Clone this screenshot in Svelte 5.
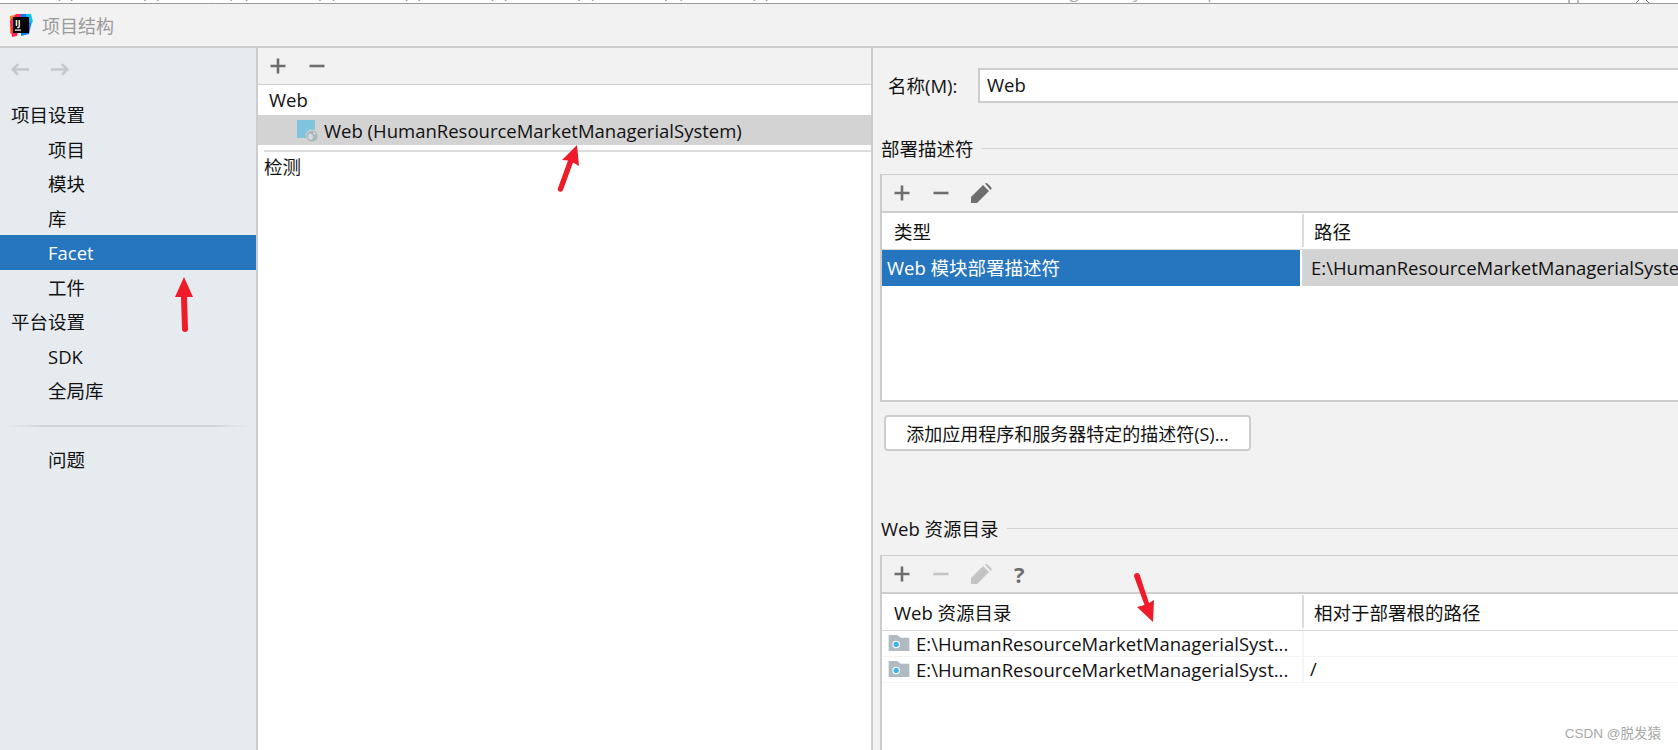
<script lang="ts">
  const nav = [
    { label: '项目设置', head: true },
    { label: '项目' },
    { label: '模块' },
    { label: '库' },
    { label: 'Facet', active: true },
    { label: '工件' },
    { label: '平台设置', head: true },
    { label: 'SDK' },
    { label: '全局库' }
  ];
  const path = 'E:\\HumanResourceMarketManagerialSystem\\web\\WEB-INF\\web.xml';
  const shortPath = 'E:\\HumanResourceMarketManagerialSyst...';
</script>

{#snippet plus()}
  <svg class="ico" viewBox="0 0 18 18"><path d="M9 1.500v15M1.500 9h15" fill="none" stroke="#6e6e6e" stroke-width="2.600" /></svg>
{/snippet}
{#snippet minus(off = false)}
  <svg class="ico" viewBox="0 0 18 18"><path d="M1.500 9h15" fill="none" stroke={off ? '#c4c4c4' : '#6e6e6e'} stroke-width="2.600" /></svg>
{/snippet}
{#snippet pencil(off = false)}
  <svg class="ico pen" viewBox="0 0 22 22"><path d="M1 21v-6L13 3l6 6L7 21zM15 1.500l1-.5q1 0 2 1l3 3q.8 1 .5 2l-1 1z" fill={off ? '#c4c4c4' : '#6e6e6e'} /></svg>
{/snippet}
{#snippet folder()}
  <svg class="folder" viewBox="0 0 22 17">
    <path d="M0 0h9l4 3h9v14H0z" fill="#afbac2" />
    <circle cx="8" cy="10" r="4" fill="#fff" />
    <circle cx="8" cy="10" r="2.800" fill="#3db4e6" />
  </svg>
{/snippet}
{#snippet arrow(w, h, d)}
  <svg class="arrow" width={w} height={h} viewBox="0 0 {w} {h}"><path {d} fill="#ee1c2b" /></svg>
{/snippet}

<div class="cut-menu">
  <span>文件(F)</span><span>编辑(E)</span><span>视图(V)</span><span>导航(N)</span><span>代码(C)</span><span>分析(Z)</span><span>重构(R)</span><span>构建(B)</span><span>运行(U)</span><span>工具(T)</span>
  <span class="cut-title">HumanResourceMarketManagerialSystem - pom.xml</span>
  <svg class="win-ctl" viewBox="0 0 90 3"><path d="M1 0v3M10 0v3M68 3l3-3M78 0l3 3" fill="none" stroke="#777" /></svg>
</div>

<header class="titlebar">
  <svg class="logo" viewBox="0 0 24 24">
    <path d="M1 3l9-2 4 4-8 18-5-3z" fill="#fc801d" />
    <path d="M1 8l6-7h6L8 23l-5 1z" fill="#fe2857" />
    <path d="M12 1h9l2 7-3 13-8 2z" fill="#087cfa" />
    <path d="M17 1h5l2 8-6 1z" fill="#07c3f2" />
    <rect x="4" y="4" width="16" height="16" fill="#000" />
    <rect x="6" y="16.500" width="6" height="1.200" fill="#fff" />
    <text x="6" y="12.500" class="logo-text">IJ</text>
  </svg>
  <span>项目结构</span>
</header>

<div class="body">
  <aside class="sidebar">
    <div class="history">
      <svg viewBox="0 0 22 16"><path d="M21 8H3M9 2L3 8l6 6" fill="none" stroke="#c6c9cc" stroke-width="2.800" /></svg>
      <svg viewBox="0 0 22 16"><path d="M1 8h18M13 2l6 6-6 6" fill="none" stroke="#c6c9cc" stroke-width="2.800" /></svg>
    </div>
    <nav>
      {#each nav as item}
        <div class="nav-item" class:head={item.head} class:active={item.active}>{item.label}</div>
      {/each}
    </nav>
    <div class="nav-sep"></div>
    <div class="nav-item">问题</div>
    <div class="annot-side">{@render arrow(18, 55, 'M9 0L18 20H12L13 52a3 3 0 0 1-6 0L6 20H0z')}</div>
  </aside>

  <section class="middle">
    <div class="mid-toolbar">{@render plus()}{@render minus()}</div>
    <div class="tree-root">Web</div>
    <div class="tree-sel">
      <svg class="web-ico" viewBox="0 0 22 22">
        <rect x="0" y="0" width="18" height="18" fill="#7fc4df" />
        <circle cx="15" cy="16" r="6.500" fill="#d3d3d3" />
        <circle cx="15" cy="16" r="5.500" fill="#a9b5bd" />
        <path d="M12 13q3 1 4 3t-2 4l-3-2zM16 11.500l3 2-2 2z" fill="#d8dde0" />
      </svg>
      Web (HumanResourceMarketManagerialSystem)
      <div class="annot-mid">{@render arrow(22, 47, 'M19 0L21 21L15 17.500L5 45a2.500 2.500 0 0 1-5-2L10 15.500L4 15z')}</div>
    </div>
    <div class="detect-line"></div>
    <div class="detect">检测</div>
  </section>

  <section class="detail">
    <div class="name-row">
      <label for="facet-name">名称(M):</label>
      <input id="facet-name" value="Web" readonly />
    </div>

    <div class="group-title">部署描述符</div>
    <div class="box">
      <div class="box-toolbar">{@render plus()}{@render minus()}{@render pencil()}</div>
      <div class="cols head">
        <div>类型</div><div>路径</div>
      </div>
      <div class="cols sel-row">
        <div class="sel-blue">Web 模块部署描述符</div>
        <div class="sel-gray">{path}</div>
      </div>
      <div class="box-empty one"></div>
    </div>

    <div class="btn-row"><button>添加应用程序和服务器特定的描述符(S)...</button></div>

    <div class="group-title res">Web 资源目录</div>
    <div class="box last">
      <div class="box-toolbar">{@render plus()}{@render minus(true)}{@render pencil(true)}<span class="help">?</span></div>
      <div class="cols head">
        <div>Web 资源目录</div><div>相对于部署根的路径</div>
      </div>
      <div class="cols res-row">
        <div>{@render folder()}{shortPath}</div><div></div>
      </div>
      <div class="cols res-row">
        <div>{@render folder()}{shortPath}</div><div>/</div>
      </div>
      <div class="annot-res">{@render arrow(20, 50, 'M19 50L3 35L10.500 33L.3 5a2.800 2.800 0 0 1 5.500-2L15 31L20 28z')}</div>
    </div>
  </section>
</div>

<div class="watermark">CSDN @脱发猿</div>

<style>
  :global(body) {
    margin: 0;
    background: #fff;
    overflow: hidden;
  }

  :global(#app) {
    position: relative;
    width: 1678px;
    height: 750px;
    overflow: hidden;
    font-family: 'Open Sans', 'Noto Sans CJK SC', sans-serif;
    font-size: 18.500px;
    color: #111;
  }

  .cut-menu {
    height: 3px;
    overflow: hidden;
    display: flex;
    gap: 32px;
    margin-left: -63px;
    line-height: 1px;
    font-size: 17px;
    white-space: nowrap;
    background: #fff;
    border-bottom: 1px solid #9a9a9a;
  }

  .cut-menu span {
    margin-top: -9px;
  }

  .cut-menu .cut-title {
    color: #aaa;
    letter-spacing: 1.500px;
  }

  .win-ctl {
    width: 90px;
    height: 3px;
    margin-left: auto;
    margin-right: 20px;
    flex: none;
  }

  .titlebar {
    height: 42px;
    display: flex;
    align-items: center;
    gap: 9px;
    padding-left: 9px;
    background: #f2f2f2;
    border-bottom: 2px solid #cdcdcd;
    color: #9a9a9a;
    font-size: 18px;
  }

  .logo {
    width: 24px;
    height: 24px;
  }

  .logo-text {
    font-size: 8.500px;
    font-weight: 700;
    fill: #fff;
  }

  .body {
    display: flex;
    height: 702px;
  }

  .sidebar {
    position: relative;
    width: 256px;
    flex: none;
    background: #e6ebf0;
    border-right: 2px solid #cdcdcd;
  }

  .history {
    height: 42px;
    display: flex;
    align-items: center;
    gap: 20px;
    padding-left: 10px;
  }

  .history svg {
    width: 20px;
    height: 15px;
  }

  nav {
    margin-top: 7px;
  }

  .nav-item {
    height: 34.500px;
    line-height: 36px;
    padding-left: 48px;
  }

  .nav-item.head {
    padding-left: 11px;
  }

  .nav-item.active {
    background: #2675bf;
    color: #fff;
  }

  .nav-sep {
    height: 2px;
    margin: 17px 8px 15px;
    background: linear-gradient(90deg, #e6ebf0, #d2d4d6 15%, #d2d4d6 85%, #e6ebf0);
  }

  .annot-side {
    position: absolute;
    left: 175px;
    top: 229px;
  }

  .arrow {
    display: block;
    overflow: visible;
  }

  .middle {
    width: 613px;
    flex: none;
    background: #fff;
    border-right: 2px solid #cdcdcd;
  }

  .mid-toolbar {
    height: 36px;
    display: flex;
    align-items: center;
    gap: 21px;
    padding-left: 11px;
    background: #f2f2f2;
    border-bottom: 1px solid #d0d0d0;
  }

  .ico {
    width: 18px;
    height: 18px;
    flex: none;
  }

  .ico.pen {
    width: 22px;
    height: 22px;
    margin-left: -1px;
  }

  .tree-root {
    height: 30px;
    line-height: 29px;
    padding-left: 11px;
  }

  .tree-sel {
    position: relative;
    height: 30px;
    display: flex;
    align-items: center;
    gap: 5px;
    padding-left: 39px;
    background: #d3d3d3;
  }

  .web-ico {
    width: 22px;
    height: 22px;
    margin-top: 2px;
  }

  .annot-mid {
    position: absolute;
    left: 300px;
    top: 30px;
  }

  .detect-line {
    height: 2px;
    margin: 5px 0 0 6px;
    background: #dcdcdc;
  }

  .detect {
    padding-left: 6px;
    line-height: 30px;
  }

  .detail {
    flex: 1;
    min-width: 0;
    background: #f2f2f2;
  }

  .name-row {
    display: flex;
    align-items: center;
    height: 35px;
    margin-top: 20px;
    padding-left: 15px;
  }

  .name-row label {
    width: 90px;
    padding-bottom: 2px;
  }

  .name-row input {
    flex: 1;
    min-width: 0;
    height: 35px;
    box-sizing: border-box;
    padding: 0 7px 2px;
    border: 2px solid #cdcdcd;
    border-right: 0;
    font: inherit;
    color: #111;
    background: #fff;
    outline: none;
  }

  .group-title {
    display: flex;
    align-items: center;
    gap: 8px;
    height: 26px;
    margin: 32px 0 13px 8px;
  }

  .group-title::after {
    content: '';
    flex: 1;
    height: 1px;
    background: #d2d2d2;
  }

  .group-title.res {
    margin: 64px 0 14px 8px;
  }

  .box {
    position: relative;
    margin-left: 7px;
    border-left: 2px solid #cdcdcd;
    border-top: 1px solid #cdcdcd;
    background: #fff;
  }

  .box-toolbar {
    height: 36px;
    display: flex;
    align-items: center;
    gap: 21px;
    padding-left: 11px;
    background: #f2f2f2;
    border-bottom: 2px solid #cdcdcd;
  }

  .help {
    font-size: 22px;
    font-weight: 700;
    color: #6e6e6e;
    margin-left: 1px;
  }

  .cols {
    display: grid;
    grid-template-columns: 420px 1fr;
  }

  .cols > div {
    white-space: nowrap;
    overflow: hidden;
  }

  .cols.head {
    height: 36px;
    line-height: 37px;
    border-bottom: 1px solid #d8d8d8;
  }

  .cols.head > div {
    padding-left: 12px;
  }

  .cols.head > div + div {
    padding-left: 10px;
    border-left: 2px solid #dcdcdc;
    height: 33px;
    margin-top: 1px;
    line-height: 35px;
  }

  .sel-row {
    height: 36px;
    line-height: 36px;
  }

  .sel-blue {
    background: #2675bf;
    color: #fff;
    padding-left: 5px;
    margin-right: 2px;
  }

  .sel-gray {
    background: #d3d3d3;
    padding-left: 9px;
  }

  .box-empty.one {
    height: 114px;
    border-bottom: 2px solid #cdcdcd;
  }

  .btn-row {
    padding: 13px 0 0 11px;
  }

  button {
    width: 367px;
    height: 36px;
    padding: 0;
    border: 2px solid #cdcdcd;
    border-radius: 4px;
    background: #fff;
    font: inherit;
    font-size: 18px;
    color: #111;
  }

  .box.last {
    height: 195px;
  }

  .res-row {
    height: 26px;
    line-height: 24px;
    border-bottom: 1px solid #f4f4f4;
    box-sizing: border-box;
  }

  .res-row > div:first-child {
    display: flex;
    align-items: center;
    gap: 6px;
    padding-left: 6px;
  }

  .res-row > div + div {
    padding-left: 6px;
    border-left: 2px solid #f6f6f6;
  }

  .folder {
    width: 22px;
    height: 16px;
    flex: none;
    margin-top: -2px;
  }

  .annot-res {
    position: absolute;
    left: 252px;
    top: 16px;
  }

  .watermark {
    position: absolute;
    right: 17px;
    bottom: 8px;
    font-family: 'Liberation Sans', 'Noto Sans CJK SC', sans-serif;
    font-size: 13.500px;
    color: #a8a8a8;
  }
</style>
